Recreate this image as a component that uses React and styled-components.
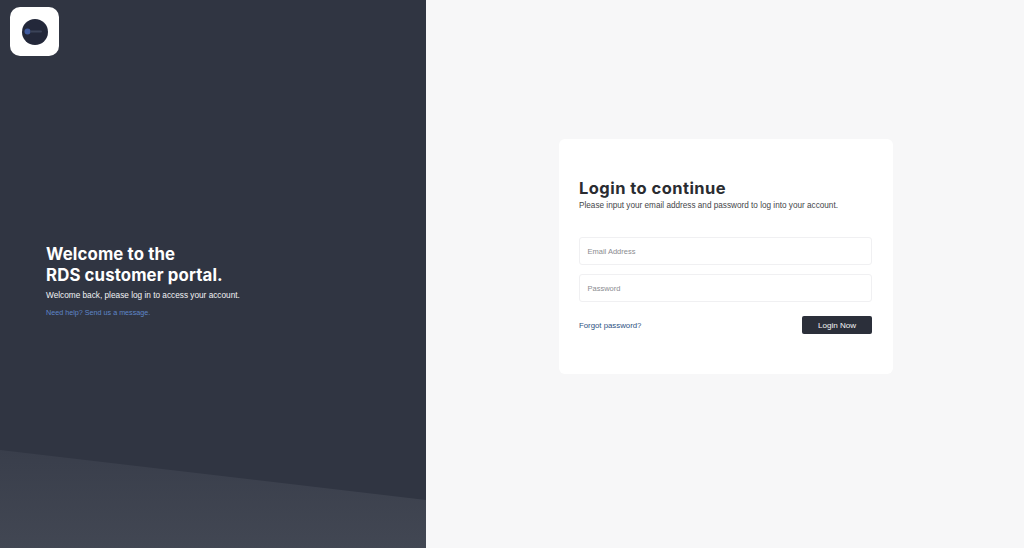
import React from "react";
import styled, { createGlobalStyle } from "styled-components";

const Global = createGlobalStyle`
  html, body { margin: 0; padding: 0; height: 100%; }
  body { font-family: "Liberation Sans", Arial, sans-serif; background: #f7f7f8; }
  * { box-sizing: border-box; }
`;

const Page = styled.div`
  display: flex;
  width: 100%;
  height: 548px;
  overflow: hidden;
`;

const Side = styled.aside`
  position: relative;
  width: 426px;
  flex: none;
  background: #303542;
  display: flex;
  flex-direction: column;
  justify-content: center;
  padding: 14px 0 0 46px;
  color: #fff;
`;

const LogoTile = styled.div`
  position: absolute;
  left: 10px;
  top: 7px;
  width: 49px;
  height: 49px;
  border-radius: 10px;
  background: #fff;
  display: flex;
  align-items: center;
  justify-content: center;
`;

const Wave = styled.svg`
  position: absolute;
  left: 0;
  bottom: 0;
  width: 426px;
  height: 98px;
  display: block;
`;

const Headline = styled.h1`
  margin: 0;
  font-family: Inter, "Open Sans", sans-serif;
  font-size: 16.8px;
  line-height: 21px;
  font-weight: 700;
  letter-spacing: 0.12px;
  color: #fff;
`;

const SideText = styled.p`
  margin: 4px 0 0;
  font-size: 8.25px;
  line-height: 12px;
  color: #f2f3f5;
`;

const HelpLink = styled.a`
  display: block;
  margin-top: 5px;
  font-size: 7.2px;
  line-height: 12px;
  color: #5f86c8;
  text-decoration: none;
`;

const Main = styled.main`
  flex: 1;
  background: #f7f7f8;
  display: flex;
  align-items: flex-start;
  justify-content: center;
  padding: 139px 0 0 2px;
`;

const Card = styled.section`
  width: 334px;
  height: 235px;
  background: #fff;
  border-radius: 6px;
  padding: 40px 21px 0 20px;
`;

const Title = styled.h2`
  margin: 0;
  font-family: Inter, "Open Sans", sans-serif;
  font-size: 16.5px;
  line-height: 18px;
  font-weight: 700;
  letter-spacing: 0.45px;
  color: #2a2c31;
`;

const Subtitle = styled.p`
  margin: 3px 0 0;
  font-size: 8.2px;
  line-height: 12px;
  color: #444649;
`;

const Fields = styled.div`
  display: flex;
  flex-direction: column;
  gap: 9px;
  margin-top: 25px;
`;

const Field = styled.div`
  height: 28px;
  border: 1px solid #f0f0f2;
  border-radius: 3px;
  background: #fff;
  padding: 0 7.5px;
  display: flex;
  align-items: center;
  font-size: 7.5px;
  color: #8a8c90;
`;

const Actions = styled.div`
  display: flex;
  align-items: center;
  justify-content: space-between;
  margin-top: 14px;
`;

const Forgot = styled.a`
  font-size: 7.8px;
  color: #2c5282;
  text-decoration: none;
`;

const LoginButton = styled.button`
  width: 70px;
  height: 18px;
  padding: 0;
  border: 0;
  border-radius: 2px;
  background: #2b2f3a;
  color: #f4f4f5;
  font-family: "Liberation Sans", Arial, sans-serif;
  font-size: 8.1px;
`;

export default function App() {
  return (
    <Page>
      <Global />
      <Side>
        <LogoTile>
          <svg width="26" height="26" viewBox="0 0 26 26" aria-hidden="true">
            <circle cx="13" cy="13" r="13" fill="#23283a" />
            <circle cx="5.5" cy="12.5" r="3" fill="#3f5a9e" />
            <rect x="8" y="11.5" width="12" height="2" rx="1" fill="#3b4358" />
          </svg>
        </LogoTile>
        <Headline>
          Welcome to the
          <br />
          RDS customer portal.
        </Headline>
        <SideText>Welcome back, please log in to access your account.</SideText>
        <HelpLink href="#">Need help? Send us a message.</HelpLink>
        <Wave viewBox="0 0 426 98" aria-hidden="true">
          <defs>
            <linearGradient id="waveFill" x1="0" y1="0" x2="0" y2="1">
              <stop offset="0" stopColor="#393e4b" />
              <stop offset="1" stopColor="#424753" />
            </linearGradient>
          </defs>
          <polygon points="0,0 426,50 426,98 0,98" fill="url(#waveFill)" />
        </Wave>
      </Side>
      <Main>
        <Card>
          <Title>Login to continue</Title>
          <Subtitle>Please input your email address and password to log into your account.</Subtitle>
          <Fields>
            <Field>Email Address</Field>
            <Field>Password</Field>
          </Fields>
          <Actions>
            <Forgot href="#">Forgot password?</Forgot>
            <LoginButton type="button">Login Now</LoginButton>
          </Actions>
        </Card>
      </Main>
    </Page>
  );
}
